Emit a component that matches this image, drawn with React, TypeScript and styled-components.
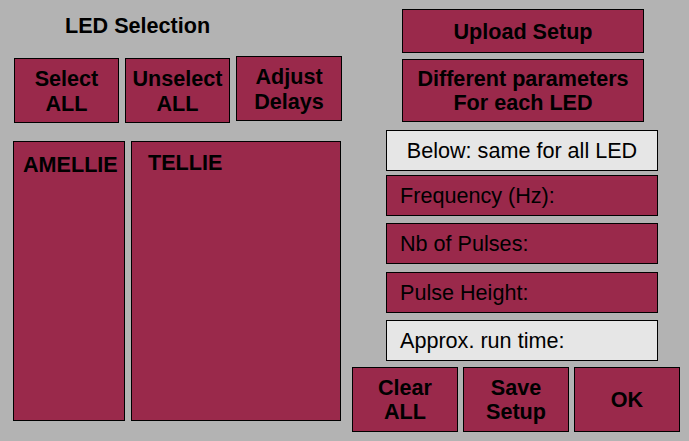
import React from "react";
import styled, { createGlobalStyle } from "styled-components";

const CRIMSON = "#9a294b";
const PANEL_GRAY = "#b3b3b3";
const LIGHT = "#e6e6e6";

const GlobalStyle = createGlobalStyle`
  html, body {
    margin: 0;
    padding: 0;
    background: ${PANEL_GRAY};
  }
  * {
    box-sizing: border-box;
  }
`;

const Window = styled.div`
  display: flex;
  width: 689px;
  height: 441px;
  padding-left: 13px;
  gap: 10px;
  background: ${PANEL_GRAY};
  font-family: "Liberation Sans", Arial, sans-serif;
  font-size: 21.6px;
  line-height: 25px;
  color: #000;
  overflow: hidden;
`;

const LeftColumn = styled.div`
  display: flex;
  flex-direction: column;
  width: 329px;
`;

const RightColumn = styled.div`
  display: flex;
  flex-direction: column;
  width: 328px;
`;

const Title = styled.div`
  height: 56px;
  padding: 13px 0 0 52px;
  font-weight: 700;
`;

const ButtonRow = styled.div<{ $indent?: number; $gap?: number }>`
  display: flex;
  align-items: flex-start;
  gap: ${(p) => p.$gap ?? 6}px;
  padding-left: ${(p) => p.$indent ?? 0}px;
`;

const ActionButton = styled.div<{ $mt?: number; $w?: number; $h?: number; $lh?: number }>`
  display: flex;
  flex-direction: column;
  align-items: center;
  justify-content: center;
  margin-top: ${(p) => p.$mt ?? 0}px;
  width: ${(p) => p.$w ?? 105}px;
  height: ${(p) => p.$h ?? 65}px;
  background: ${CRIMSON};
  border: 1px solid #000;
  font-weight: 700;
  line-height: ${(p) => p.$lh ?? 25}px;
  text-align: center;
  white-space: nowrap;
`;

const LedLists = styled.div`
  display: flex;
  gap: 6px;
  margin-top: 18px;
`;

const LedPanel = styled.div<{ $w: number; $pt: number; $pl: number }>`
  width: ${(p) => p.$w}px;
  height: 280px;
  padding: ${(p) => p.$pt}px 0 0 ${(p) => p.$pl}px;
  background: ${CRIMSON};
  border: 1px solid #000;
  font-weight: 700;
`;

const WideButton = styled(ActionButton)`
  margin-left: 50px;
`;

const ParamBox = styled.div<{ $mt: number; $light?: boolean; $center?: boolean }>`
  display: flex;
  align-items: center;
  justify-content: ${(p) => (p.$center ? "center" : "flex-start")};
  margin: ${(p) => p.$mt}px 0 0 34px;
  width: 272px;
  height: 41px;
  padding-left: ${(p) => (p.$center ? 0 : 13)}px;
  background: ${(p) => (p.$light ? LIGHT : CRIMSON)};
  border: 1px solid #000;
  white-space: nowrap;
`;

const params = [
  { label: "Frequency (Hz):", mt: 4, light: false },
  { label: "Nb of Pulses:", mt: 7, light: false },
  { label: "Pulse Height:", mt: 8, light: false },
  { label: "Approx. run time:", mt: 7, light: true },
];

export default function App() {
  return (
    <>
      <GlobalStyle />
      <Window>
        <LeftColumn>
          <Title>LED Selection</Title>
          <ButtonRow $indent={1}>
            <ActionButton $mt={2}>
              <span>Select</span>
              <span>ALL</span>
            </ActionButton>
            <ActionButton $mt={2}>
              <span>Unselect</span>
              <span>ALL</span>
            </ActionButton>
            <ActionButton $w={106}>
              <span>Adjust</span>
              <span>Delays</span>
            </ActionButton>
          </ButtonRow>
          <LedLists>
            <LedPanel $w={112} $pt={10} $pl={9}>
              AMELLIE
            </LedPanel>
            <LedPanel $w={210} $pt={8} $pl={16}>
              TELLIE
            </LedPanel>
          </LedLists>
        </LeftColumn>
        <RightColumn>
          <WideButton $mt={9} $w={242} $h={44}>
            Upload Setup
          </WideButton>
          <WideButton $mt={6} $w={242} $h={63} $lh={24}>
            <span>Different parameters</span>
            <span>For each LED</span>
          </WideButton>
          <ParamBox $mt={8} $light $center>
            Below: same for all LED
          </ParamBox>
          {params.map((p) => (
            <ParamBox key={p.label} $mt={p.mt} $light={p.light}>
              {p.label}
            </ParamBox>
          ))}
          <ButtonRow $gap={5}>
            <ActionButton $mt={6} $w={106} $lh={24}>
              <span>Clear</span>
              <span>ALL</span>
            </ActionButton>
            <ActionButton $mt={6} $w={106} $lh={24}>
              <span>Save</span>
              <span>Setup</span>
            </ActionButton>
            <ActionButton $mt={6} $w={106}>
              OK
            </ActionButton>
          </ButtonRow>
        </RightColumn>
      </Window>
    </>
  );
}
